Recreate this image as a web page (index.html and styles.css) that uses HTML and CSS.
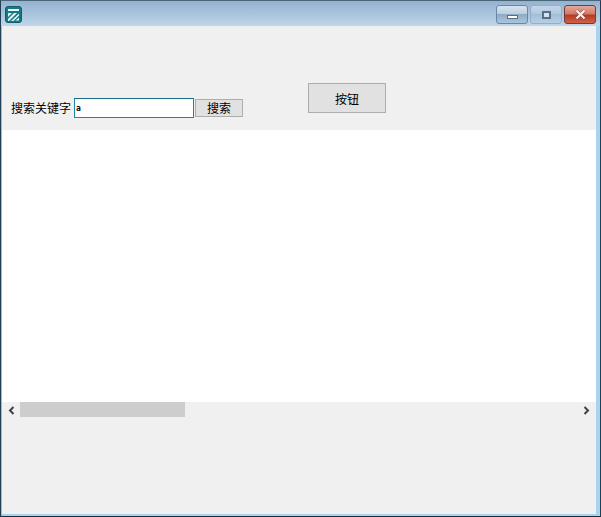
FILE: index.html
```html
<!DOCTYPE html>
<html lang="zh">
<head>
<meta charset="utf-8">
<title>搜索</title>
<link rel="stylesheet" href="styles.css">
</head>
<body>
<div class="window">
  <header class="titlebar">
    <svg class="app-icon" width="17" height="17" viewBox="0 0 17 17">
      <rect x="0.5" y="0.5" width="16" height="16" rx="2.5" fill="#137a86" stroke="#0d5f6c"/>
      <path d="M3 3H14V5H3Z" fill="#eef8f8"/>
      <path d="M3 7H7L3 11ZM9 7H12L4 15H3V13ZM14 7.5V9.5L8.5 15H6ZM14 11.5V14.5H10.5Z" fill="#e4f4f4"/>
    </svg>
    <div class="controls">
      <div class="ctl ctl-min"><span class="min-glyph"></span></div>
      <div class="ctl ctl-max"><span class="max-glyph"></span></div>
      <div class="ctl ctl-close">
        <svg width="13" height="11" viewBox="0 0 13 11"><path d="M2.5 1.5L10.5 9.5M10.5 1.5L2.5 9.5" stroke="#5a2a22" stroke-width="3.6" fill="none" opacity=".55"/><path d="M2.5 1.5L10.5 9.5M10.5 1.5L2.5 9.5" stroke="#f4f0ee" stroke-width="2.4" fill="none"/></svg>
      </div>
    </div>
  </header>
  <main class="client">
    <section class="toolbar">
      <label class="label" for="kw">搜索关键字</label>
      <input id="kw" class="search" type="text" value="a">
      <button class="btn btn-search">搜索</button>
      <button class="btn btn-main">按钮</button>
    </section>
    <section class="grid-area"></section>
    <section class="scrollbar">
      <svg class="arrow" width="7" height="9" viewBox="0 0 7 9"><path d="M5.5 1L2 4.5L5.5 8" fill="none" stroke="#404040" stroke-width="2"/></svg>
      <div class="track"><div class="thumb"></div></div>
      <svg class="arrow" width="7" height="9" viewBox="0 0 7 9"><path d="M1.5 1L5 4.5L1.5 8" fill="none" stroke="#404040" stroke-width="2"/></svg>
    </section>
    <section class="footer-area"></section>
  </main>
</div>
</body>
</html>
```
FILE: styles.css
```css
html, body {
  margin: 0;
  padding: 0;
  width: 601px;
  height: 517px;
  overflow: hidden;
  font-family: "Noto Sans CJK SC", "Liberation Sans", sans-serif;
  font-size: 12px;
  color: #000;
}
.window {
  box-sizing: border-box;
  width: 601px;
  height: 517px;
  display: flex;
  flex-direction: column;
  background: linear-gradient(to right, #8fb8d8 0, #a9d4ee 2px, #a9d4ee 100%);
  border: 1px solid #1f3f55;
  border-top-color: #4a6478;
  border-bottom-color: #123044;
  padding: 0 4px 2px 1px;
}
.titlebar {
  height: 25px;
  flex: none;
  display: flex;
  align-items: flex-start;
  justify-content: space-between;
  margin: 0 -4px 0 -1px;
  padding: 5px 4px 0 4px;
  box-sizing: border-box;
  background: linear-gradient(to bottom, #94b3d0 0, #a9c3dc 50%, #c0d7ea 100%);
}
.app-icon { flex: none; }
.controls { display: flex; gap: 2px; margin-top: -1px; }
.ctl {
  box-sizing: border-box;
  height: 19px;
  display: flex;
  align-items: center;
  justify-content: center;
  border: 1px solid #5f7f9c;
  border-radius: 3px;
}
.ctl-min {
  width: 32px;
  background: linear-gradient(to bottom, #d6e3ee 0, #bccfe1 45%, #8fabc4 50%, #aac5dc 100%);
  border-color: #6a87a2;
}
.ctl-max {
  width: 32px;
  background: linear-gradient(to bottom, #c3d6e8 0, #b0c9e0 45%, #a2bed8 50%, #b6cfe5 100%);
  border-color: #93aec6;
}
.ctl-close {
  width: 32px;
  background: linear-gradient(to bottom, #e3aa9c 0, #d27a68 45%, #b93a24 55%, #d0604a 100%);
  border-color: #7a3a30;
}
.min-glyph {
  width: 9px;
  height: 2px;
  margin-top: 4px;
  background: #fff;
  border: 1px solid #566e86;
}
.max-glyph {
  box-sizing: border-box;
  width: 9px;
  height: 8px;
  background: #d5e2ee;
  border: 2px solid #566e86;
}
.client {
  flex: 1;
  display: flex;
  flex-direction: column;
  background: #f0f0f0;
  min-height: 0;
}
.toolbar {
  height: 104px;
  flex: none;
  box-sizing: border-box;
  padding: 72px 0 0 9px;
  display: flex;
  align-items: flex-start;
}
.label {
  width: 60px;
  line-height: 20px;
  margin-right: 3px;
  white-space: nowrap;
}
.search {
  box-sizing: border-box;
  width: 120px;
  height: 20px;
  margin: 0 1px 0 0;
  padding: 0 1px;
  border: 1px solid #1a86a8;
  border-top-color: #1a6c8c;
  background: #fff;
  font-family: "DejaVu Sans Mono", monospace;
  font-size: 8px;
  font-weight: bold;
  outline: none;
}
.btn {
  box-sizing: border-box;
  padding: 0;
  background: #e1e1e1;
  border: 1px solid #adadad;
  font-family: "Noto Sans CJK SC", sans-serif;
  font-size: 12px;
  color: #000;
}
.btn-search {
  width: 48px;
  height: 18px;
  margin-top: 1px;
  line-height: 16px;
}
.btn-main {
  width: 78px;
  height: 30px;
  margin: -15px 0 0 65px;
}
.grid-area {
  height: 272px;
  flex: none;
  background: #fff;
}
.scrollbar {
  height: 17px;
  flex: none;
  display: flex;
  align-items: center;
  background: #f0f0f0;
}
.arrow { flex: none; margin: 0 6px; }
.track {
  flex: 1;
  height: 100%;
  margin-left: -1px;
}
.thumb {
  width: 165px;
  height: 15px;
  background: #cdcdcd;
}
.footer-area {
  flex: 1;
  background: #f0f0f0;
}
```
